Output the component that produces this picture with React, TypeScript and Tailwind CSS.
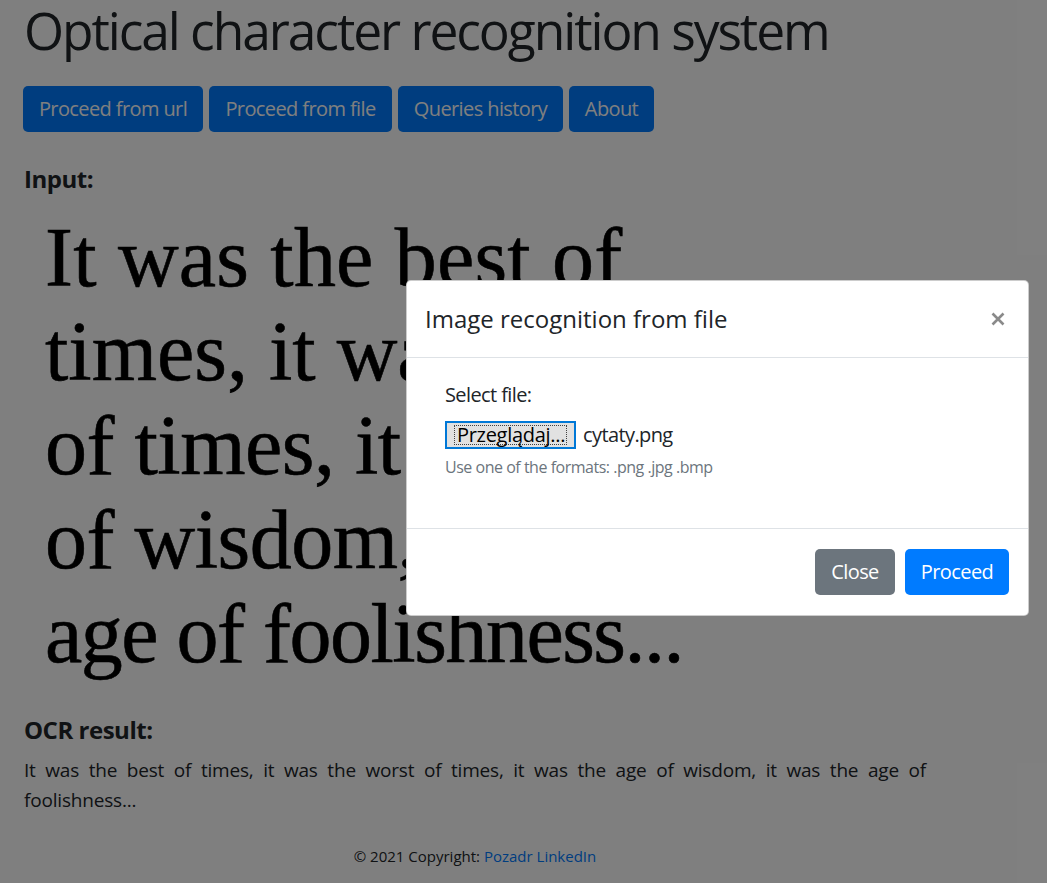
import React from "react";

const navButtons = [
  { label: "Proceed from url", w: "w-[180px]" },
  { label: "Proceed from file", w: "w-[183px]" },
  { label: "Queries history", w: "w-[165px]" },
  { label: "About", w: "w-[85px]" },
];

const imageLines = [
  { text: "It was the best of", cls: "tracking-[0.2px]" },
  { text: "times, it was the worst", cls: "tracking-[0px]" },
  { text: "of times, it was the age", cls: "tracking-[-0.5px]" },
  { text: "of wisdom, it was the", cls: "tracking-[-0.5px]" },
  { text: "age of foolishness...", cls: "tracking-[-1.5px]" },
];

export default function App() {
  return (
    <div className="relative h-[883px] w-full overflow-hidden bg-white font-['Open_Sans',sans-serif] text-[#212529]">
      <div className="w-[950px] px-[24px]">
        <h1 className="m-0 text-[51.5px] font-normal leading-[60px] tracking-[-0.04em] whitespace-nowrap">
          Optical character recognition system
        </h1>

        <div className="mt-[26px] ml-[-1px] flex gap-[6px]">
          {navButtons.map((b) => (
            <button
              key={b.label}
              className={`${b.w} h-[46px] rounded-[5px] bg-[#007bff] text-[20px] leading-[30px] tracking-[-0.03em] text-white`}
            >
              {b.label}
            </button>
          ))}
        </div>

        <h4 className="mt-[32px] text-[24px] font-bold leading-[30px] tracking-[-0.02em]">Input:</h4>

        <div className="mt-[17px] pl-[21px] font-['Liberation_Serif',serif] text-[84px] leading-[94px] text-black whitespace-nowrap [-webkit-text-stroke:0.6px_black]">
          {imageLines.map((l) => (
            <div key={l.text} className={l.cls}>
              {l.text}
            </div>
          ))}
        </div>

        <h4 className="mt-[34px] text-[24px] font-bold leading-[30px] tracking-[-0.02em]">OCR result:</h4>

        <p className="mt-[10px] text-justify text-[19px] font-normal leading-[30px] tracking-[-0.01em]">
          It was the best of times, it was the worst of times, it was the age of wisdom, it was the age of
          foolishness...
        </p>

        <div className="mt-[29px] text-center text-[15px] leading-[24px]">
          © 2021 Copyright: <a className="text-[#007bff]">Pozadr LinkedIn</a>
        </div>
      </div>

      <div className="absolute inset-0 bg-black/50" />

      <div className="absolute left-[406px] top-[280px] w-[623px] rounded-[5px] border border-black/20 bg-white">
        <div className="flex h-[77px] items-center justify-between border-b border-[#dee2e6] pl-[18px] pr-[23px]">
          <h5 className="text-[24px] leading-[36px]">Image recognition from file</h5>
          <svg width="14" height="14" viewBox="0 0 14 14" className="block">
            <path d="M1.5 1.5 L12.5 12.5 M12.5 1.5 L1.5 12.5" stroke="#8a8a8a" strokeWidth="2.6" />
          </svg>
        </div>

        <div className="h-[170px] pl-[38px] pt-[22px]">
          <div className="text-[20px] leading-[30px] tracking-[-0.03em]">Select file:</div>
          <div className="mt-[11px] flex items-center">
            <div className="relative flex h-[28px] w-[131px] items-center border-2 border-[#0078d7] bg-[#e1e1e1] pl-[10px]">
              <span className="absolute bottom-[2px] left-[7px] right-[7px] top-[2px] border border-dotted border-black/70" />
              <span className="text-[20px] leading-[24px] tracking-[-0.015em] text-black">Przeglądaj...</span>
            </div>
            <span className="ml-[7px] text-[20px] leading-[24px] tracking-[-0.03em]">cytaty.png</span>
          </div>
          <div className="mt-[7px] text-[16px] leading-[22px] tracking-[-0.03em] text-[#6c757d]">
            Use one of the formats: .png .jpg .bmp
          </div>
        </div>

        <div className="flex h-[87px] items-center justify-end gap-[10px] border-t border-[#dee2e6] pr-[19px]">
          <button className="h-[46px] w-[80px] rounded-[5px] bg-[#6c757d] text-[20px] tracking-[-0.03em] text-white">
            Close
          </button>
          <button className="h-[46px] w-[104px] rounded-[5px] bg-[#007bff] text-[20px] tracking-[-0.03em] text-white">
            Proceed
          </button>
        </div>
      </div>
    </div>
  );
}
